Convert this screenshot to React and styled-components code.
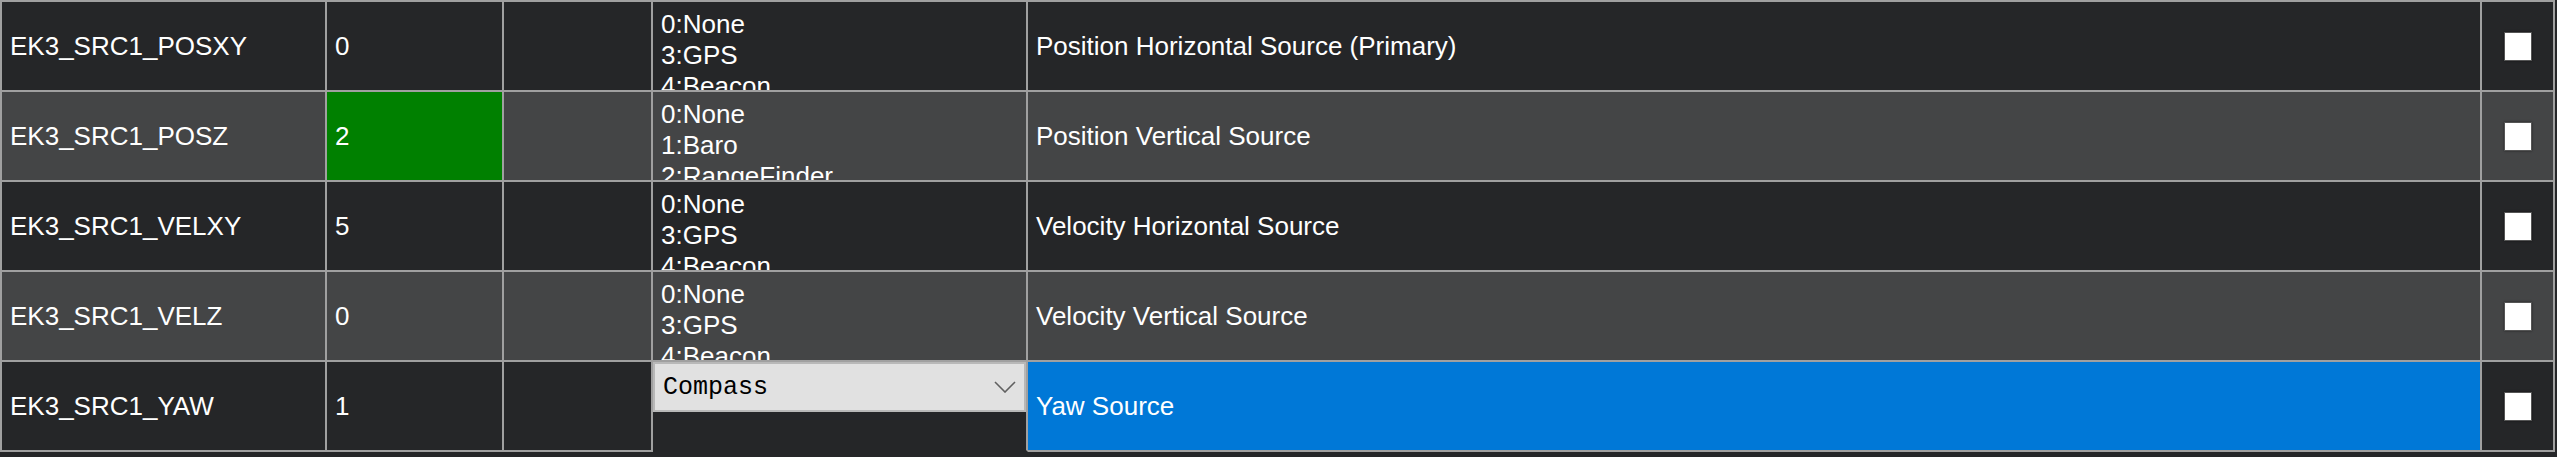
import React from "react";
import styled, { createGlobalStyle } from "styled-components";

const GlobalStyle = createGlobalStyle`
  html, body {
    margin: 0;
    padding: 0;
    background: #252628;
  }
  body {
    font-family: "Liberation Sans", Arial, sans-serif;
  }
`;

const LINE = "#a0a0a0";
const DARK = "#252628";
const GRAY = "#444546";

const Table = styled.div`
  display: grid;
  grid-template-columns: 325px 177px 149px 375px 1454px 73px;
  grid-auto-rows: 90px;
  width: 2553px;
  border-top: 2px solid ${LINE};
  border-left: 2px solid ${LINE};
  font-family: "Liberation Sans", Arial, sans-serif;
  font-size: 26px;
  color: #ffffff;
`;

const Cell = styled.div`
  box-sizing: border-box;
  border-right: 2px solid ${LINE};
  border-bottom: 2px solid ${(p) => (p.$editing ? DARK : LINE)};
  background: ${(p) =>
    p.$selected ? "#0078d7" : p.$changed ? "#008000" : p.$alt ? GRAY : DARK};
  display: flex;
  align-items: center;
  padding: 0 8px;
  overflow: hidden;
  white-space: nowrap;
`;

const OptionsCell = styled(Cell)`
  flex-direction: column;
  align-items: flex-start;
  justify-content: flex-start;
  padding: 7px 8px 0;
  line-height: 31px;
`;

const EditCell = styled(Cell)`
  padding: 0;
  align-items: flex-start;
`;

const Combo = styled.div`
  box-sizing: border-box;
  width: 100%;
  height: 50px;
  background: #e1e1e1;
  border: 2px solid #b8b8b8;
  display: flex;
  align-items: center;
  justify-content: space-between;
  padding: 0 8px 0 8px;
  font-family: "Liberation Mono", "Courier New", monospace;
  font-size: 25px;
  color: #000;
`;

const CheckCell = styled(Cell)`
  justify-content: center;
  padding: 0;
`;

const Check = styled.div`
  box-sizing: border-box;
  width: 28px;
  height: 29px;
  background: #ffffff;
  border: 1px solid #555;
  box-shadow: 0 0 2px rgba(0, 0, 0, 0.5);
`;

const rows = [
  {
    name: "EK3_SRC1_POSXY",
    value: "0",
    options: ["0:None", "3:GPS", "4:Beacon"],
    desc: "Position Horizontal Source (Primary)",
  },
  {
    name: "EK3_SRC1_POSZ",
    value: "2",
    changed: true,
    options: ["0:None", "1:Baro", "2:RangeFinder"],
    desc: "Position Vertical Source",
  },
  {
    name: "EK3_SRC1_VELXY",
    value: "5",
    options: ["0:None", "3:GPS", "4:Beacon"],
    desc: "Velocity Horizontal Source",
  },
  {
    name: "EK3_SRC1_VELZ",
    value: "0",
    options: ["0:None", "3:GPS", "4:Beacon"],
    desc: "Velocity Vertical Source",
  },
  {
    name: "EK3_SRC1_YAW",
    value: "1",
    editing: "Compass",
    selected: true,
    desc: "Yaw Source",
  },
];

function Chevron() {
  return (
    <svg width="22" height="12" viewBox="0 0 22 12">
      <polyline
        points="1,1 11,11 21,1"
        fill="none"
        stroke="#606060"
        strokeWidth="1.6"
      />
    </svg>
  );
}

export default function App() {
  return (
    <>
      <GlobalStyle />
      <Table>
        {rows.map((r, i) => {
          const alt = i % 2 === 1;
          return (
            <React.Fragment key={r.name}>
              <Cell $alt={alt}>{r.name}</Cell>
              <Cell $alt={alt} $changed={r.changed}>
                {r.value}
              </Cell>
              <Cell $alt={alt} />
              {r.editing ? (
                <EditCell $alt={alt} $editing>
                  <Combo>
                    <span>{r.editing}</span>
                    <Chevron />
                  </Combo>
                </EditCell>
              ) : (
                <OptionsCell $alt={alt}>
                  {r.options.map((o) => (
                    <div key={o}>{o}</div>
                  ))}
                </OptionsCell>
              )}
              <Cell $alt={alt} $selected={r.selected}>
                {r.desc}
              </Cell>
              <CheckCell $alt={alt}>
                <Check />
              </CheckCell>
            </React.Fragment>
          );
        })}
      </Table>
    </>
  );
}
